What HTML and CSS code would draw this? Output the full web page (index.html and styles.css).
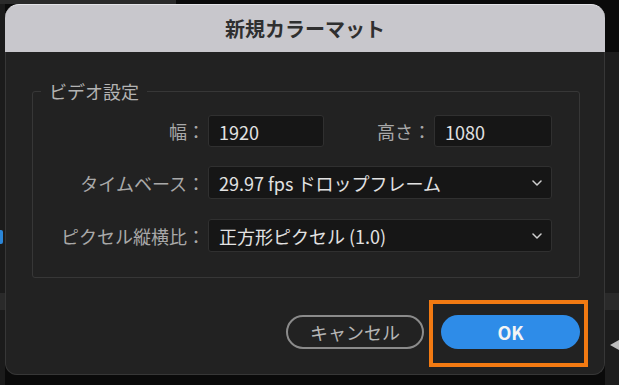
FILE: index.html
```html
<!DOCTYPE html>
<html lang="ja">
<head>
    <meta charset="UTF-8">
    <meta name="viewport" content="width=device-width, initial-scale=1.0">
    <title>新規カラーマット</title>
    <link rel="stylesheet" href="styles.css">
</head>
<body>
    <div class="topbar"><div class="topbar-tab"></div></div>
    <div class="stage">
        <div class="side side-left">
            <div class="side-mark"></div>
            <div class="side-band"></div>
        </div>

        <div class="dialog">
            <div class="dialog-title">新規カラーマット</div>
            <div class="dialog-body">
                <fieldset class="group">
                    <legend>ビデオ設定</legend>
                    <div class="row row-size">
                        <span class="label">幅：</span>
                        <div class="field field-w">1920</div>
                        <span class="label label-h">高さ：</span>
                        <div class="field field-h">1080</div>
                    </div>
                    <div class="row row-select">
                        <span class="label">タイムベース：</span>
                        <div class="field field-select">
                            <span>29.97 fps ドロップフレーム</span>
                            <svg class="chevron" width="10" height="6" viewBox="0 0 10 6"><path d="M1 1 L5 5 L9 1" fill="none" stroke="#cfcfcf" stroke-width="1.5" stroke-linecap="round" stroke-linejoin="round"/></svg>
                        </div>
                    </div>
                    <div class="row row-select">
                        <span class="label">ピクセル縦横比：</span>
                        <div class="field field-select">
                            <span>正方形ピクセル (1.0)</span>
                            <svg class="chevron" width="10" height="6" viewBox="0 0 10 6"><path d="M1 1 L5 5 L9 1" fill="none" stroke="#cfcfcf" stroke-width="1.5" stroke-linecap="round" stroke-linejoin="round"/></svg>
                        </div>
                    </div>
                </fieldset>

                <div class="actions">
                    <button class="btn btn-cancel">キャンセル</button>
                    <div class="highlight">
                        <button class="btn btn-ok">OK</button>
                    </div>
                </div>
            </div>
        </div>

        <div class="side side-right">
            <div class="side-band"></div>
            <div class="side-arrow"></div>
        </div>
    </div>
</body>
</html>
```

FILE: styles.css
```css
body {
    margin: 0;
    padding: 0;
    width: 619px;
    height: 385px;
    overflow: hidden;
    background-color: #0a0a0a;
    font-family: "Noto Sans CJK JP", "Noto Sans", sans-serif;
    display: flex;
    flex-direction: column;
}
.topbar {
    height: 4px;
    display: flex;
}
.topbar-tab {
    width: 176px;
    background-color: #2a2a2a;
}
.stage {
    display: flex;
    flex: 1;
}
.side {
    display: flex;
    flex-direction: column;
    overflow: hidden;
}
.side-left {
    width: 5px;
    background-color: #1b1b1b;
}
.side-right {
    width: 14px;
    margin-top: 48px;
    background-color: #1d1d1d;
}
/* edge of a blue letter peeking out from behind the dialog */
.side-mark {
    margin-top: 226px;
    width: 3px;
    height: 14px;
    border-radius: 0 2px 2px 0;
    background-color: #2b86d8;
}
.side-left .side-band {
    margin-top: 49px;
    height: 17px;
    background-color: #2a2a2a;
}
.side-right .side-band {
    margin-top: 241px;
    height: 17px;
    background-color: #2a2a2a;
}
.side-arrow {
    margin-top: 30px;
    margin-left: 5px;
    width: 0;
    height: 0;
    border-top: 5px solid transparent;
    border-bottom: 5px solid transparent;
    border-right: 9px solid #bdbdbd;
}

.dialog {
    width: 600px;
    display: flex;
    flex-direction: column;
}
.dialog-title {
    height: 47px;
    border-top: 1px solid #e4e4e8;
    border-radius: 14px 14px 0 0;
    background-color: #c8c7cc;
    color: #2f2f2f;
    font-size: 20px;
    font-weight: bold;
    display: flex;
    align-items: center;
    justify-content: center;
}
.dialog-body {
    background-color: #222222;
    border: 1px solid #373737;
    border-top: none;
    border-radius: 0 0 12px 12px;
    padding-bottom: 7px;
    display: flex;
    flex-direction: column;
}

.group {
    margin: 28px 24px 0 26px;
    padding: 13px 27px 25px 0;
    border: 1px solid #373737;
    border-radius: 3px;
    display: flex;
    flex-direction: column;
    gap: 19px;
}
.group legend {
    margin-left: 8px;
    padding: 0 8px;
    font-size: 18px;
    line-height: 22px;
    color: #b3b3b3;
}
.row {
    display: flex;
    align-items: center;
}
.row-size {
    height: 32px;
}
.row-select {
    height: 33px;
}
.row-select + .row-select {
    margin-top: 1px;
}
.label {
    width: 172px;
    margin-right: 3px;
    text-align: right;
    font-size: 18px;
    color: #a9a9a9;
    white-space: nowrap;
}
.label-h {
    width: auto;
    flex: 1;
}
.field {
    box-sizing: border-box;
    height: 100%;
    background-color: #161616;
    border: 1px solid #303030;
    border-radius: 3px;
    padding: 2px 9px 0 10px;
    font-size: 18px;
    color: #e2e2e2;
    display: flex;
    align-items: center;
    white-space: nowrap;
}
.field-w {
    width: 116px;
}
.field-h {
    width: 118px;
}
.field-select {
    flex: 1;
    justify-content: space-between;
    padding-top: 0;
}
.chevron {
    margin-top: 1px;
}

.actions {
    margin-top: 22px;
    padding-right: 16px;
    display: flex;
    justify-content: flex-end;
    align-items: flex-start;
}
.btn {
    box-sizing: border-box;
    height: 34px;
    border-radius: 17px;
    font-family: "Noto Sans CJK JP", "Noto Sans", sans-serif;
    font-size: 18px;
    cursor: pointer;
    padding: 0;
}
.btn-cancel {
    width: 138px;
    margin-top: 15px;
    margin-right: 5px;
    background-color: transparent;
    border: 2px solid #8b8b8b;
    color: #b5b5b5;
}
.highlight {
    border: 4px solid #f27a12;
    padding: 11px 4px 14px 8px;
}
.btn-ok {
    width: 139px;
    display: block;
    background-color: #2e8ce8;
    border: none;
    color: #f4f4f4;
    font-weight: bold;
}
```
